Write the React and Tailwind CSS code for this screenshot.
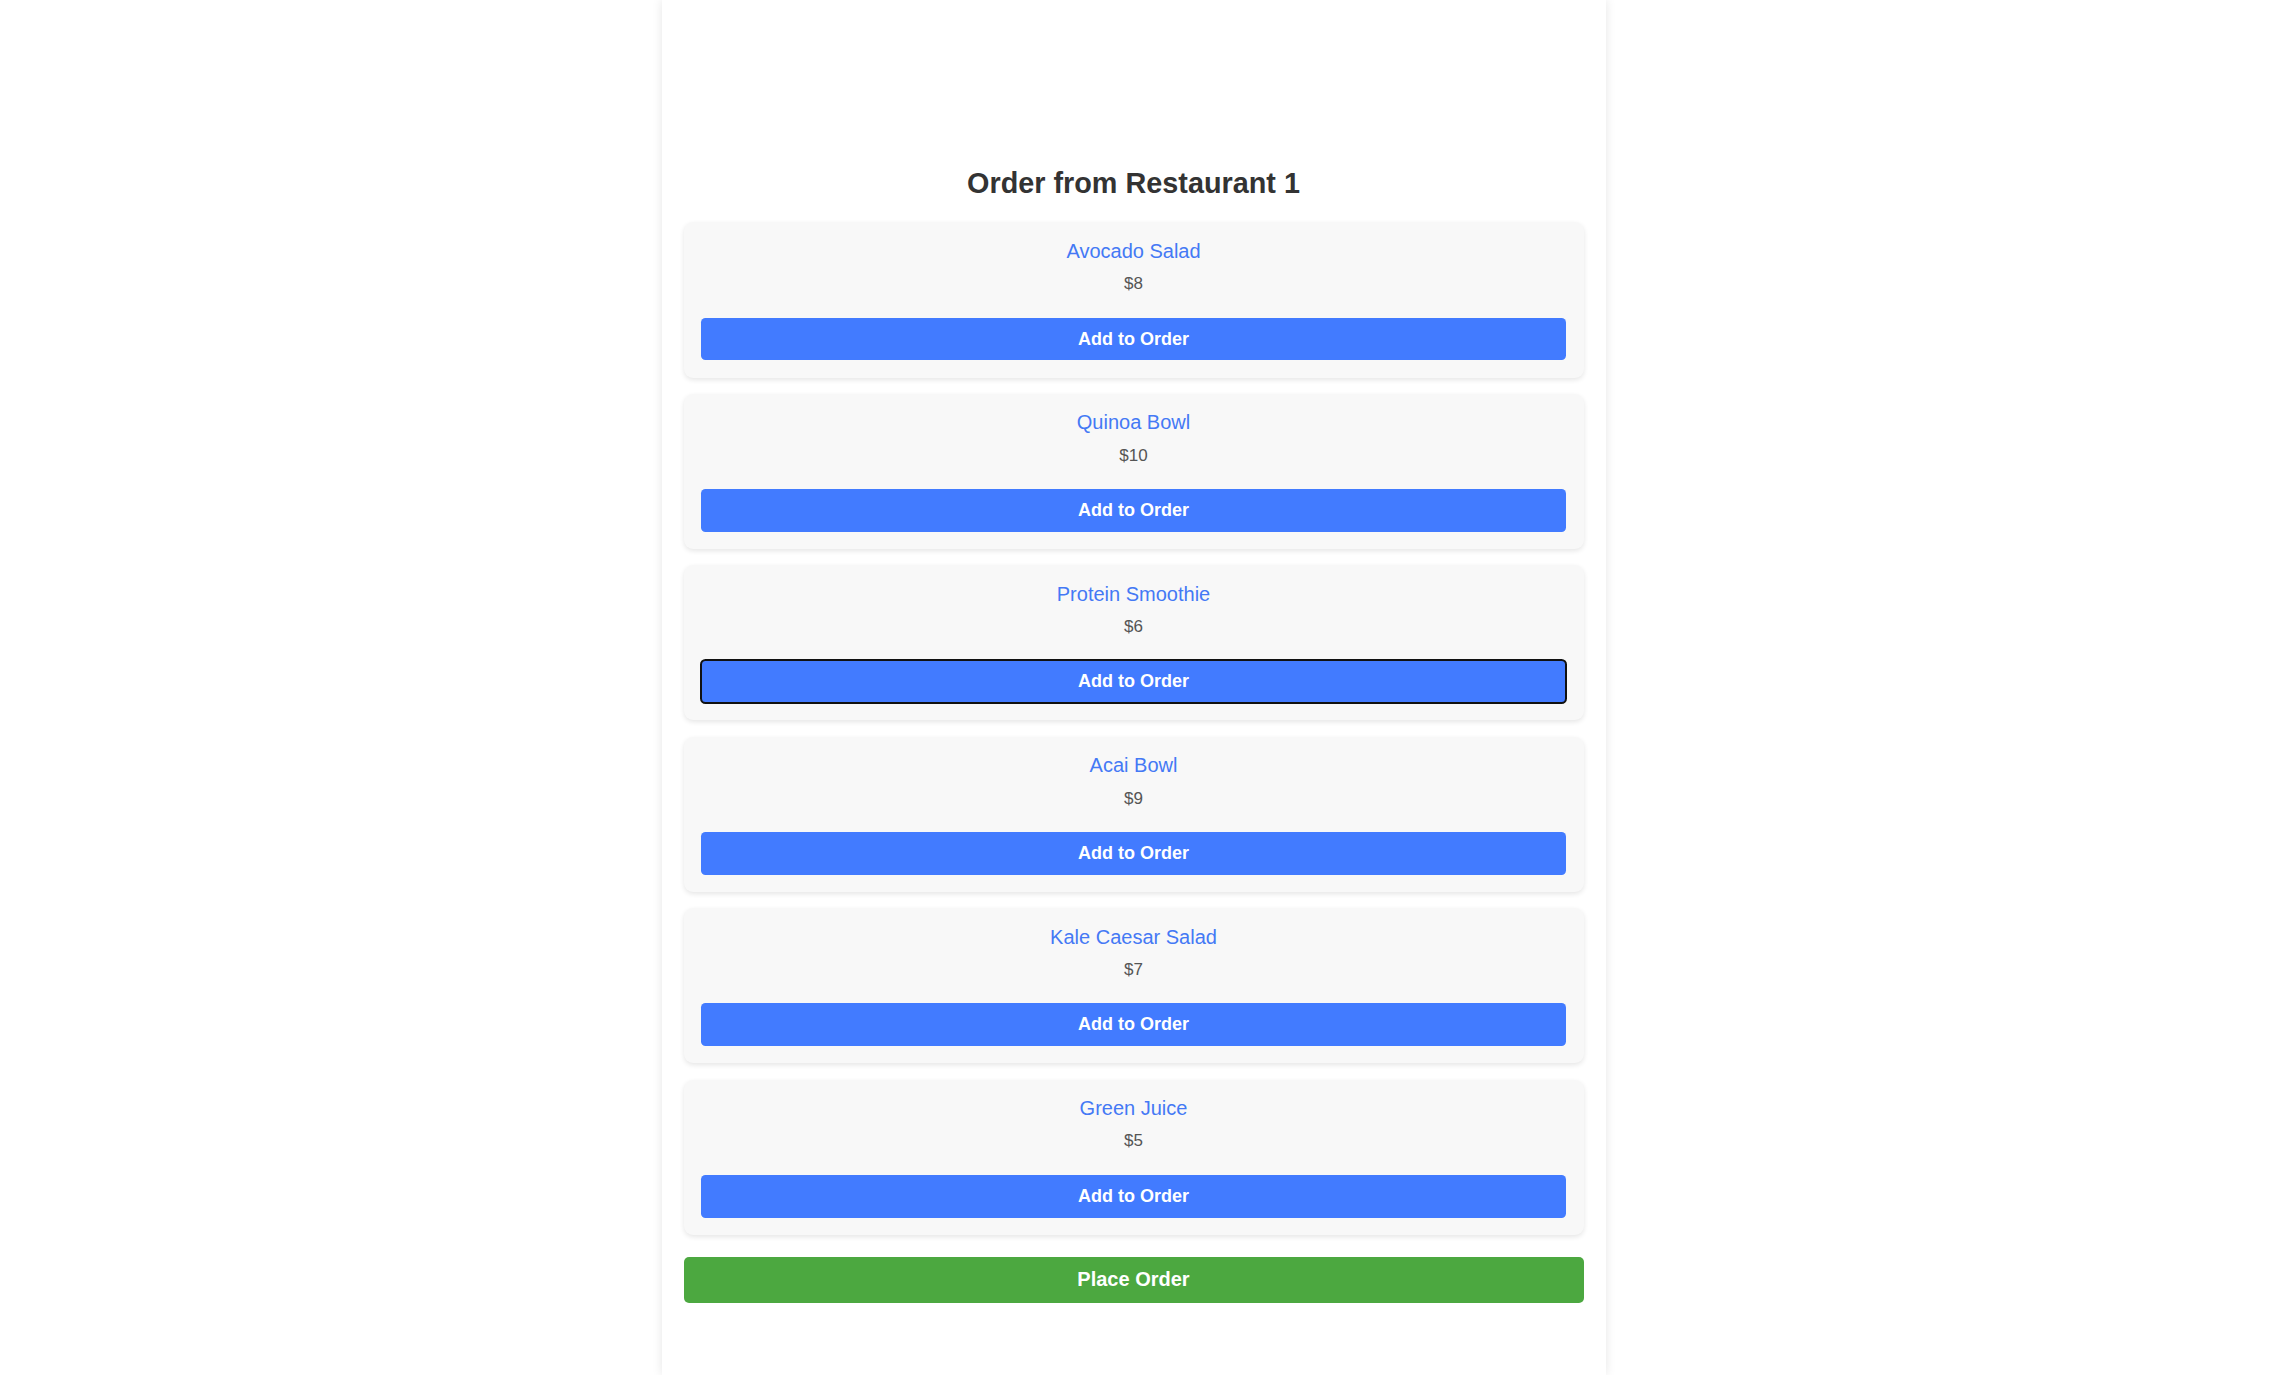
import React from "react";

const items = [
  { name: "Avocado Salad", price: 8 },
  { name: "Quinoa Bowl", price: 10 },
  { name: "Protein Smoothie", price: 6, focused: true },
  { name: "Acai Bowl", price: 9 },
  { name: "Kale Caesar Salad", price: 7 },
  { name: "Green Juice", price: 5 },
];

export default function App() {
  return (
    <div
      className="w-[2267px] h-[1375px] overflow-hidden bg-white"
      style={{ fontFamily: '"Liberation Sans", Arial, sans-serif' }}
    >
      <div className="mx-auto w-[944px] h-full bg-white shadow-[0_0_10px_rgba(0,0,0,0.1)] pt-[167px] px-[22px]">
        <h1 className="text-center text-[28.8px] leading-[33.1px] font-bold text-[#333] mb-[22.3px]">
          Order from Restaurant 1
        </h1>
        <div className="flex flex-col gap-[16.3px]">
          {items.map((it) => (
            <div
              key={it.name}
              className="bg-[#f8f8f8] rounded-[9px] shadow-[0_2px_5px_rgba(0,0,0,0.1)] px-[17.3px] pt-[17.4px] pb-[17.3px] flex flex-col items-center"
            >
              <div className="text-[20px] leading-[23px] text-[#4479f5]">{it.name}</div>
              <div className="mt-[11.4px] text-[17px] leading-[19.5px] text-[#555]">${it.price}</div>
              <button
                className={
                  "mt-[23.9px] w-full h-[42.7px] rounded-[4.5px] bg-[#427bff] text-white font-bold text-[18px] leading-[20.7px] " +
                  (it.focused ? "outline-2 outline-[#111] outline-offset-[-1px]" : "")
                }
              >
                Add to Order
              </button>
            </div>
          ))}
        </div>
        <button className="mt-[22px] w-full h-[46px] rounded-[5px] bg-[#4ca840] text-white font-bold text-[20px] leading-[23px]">
          Place Order
        </button>
      </div>
    </div>
  );
}
